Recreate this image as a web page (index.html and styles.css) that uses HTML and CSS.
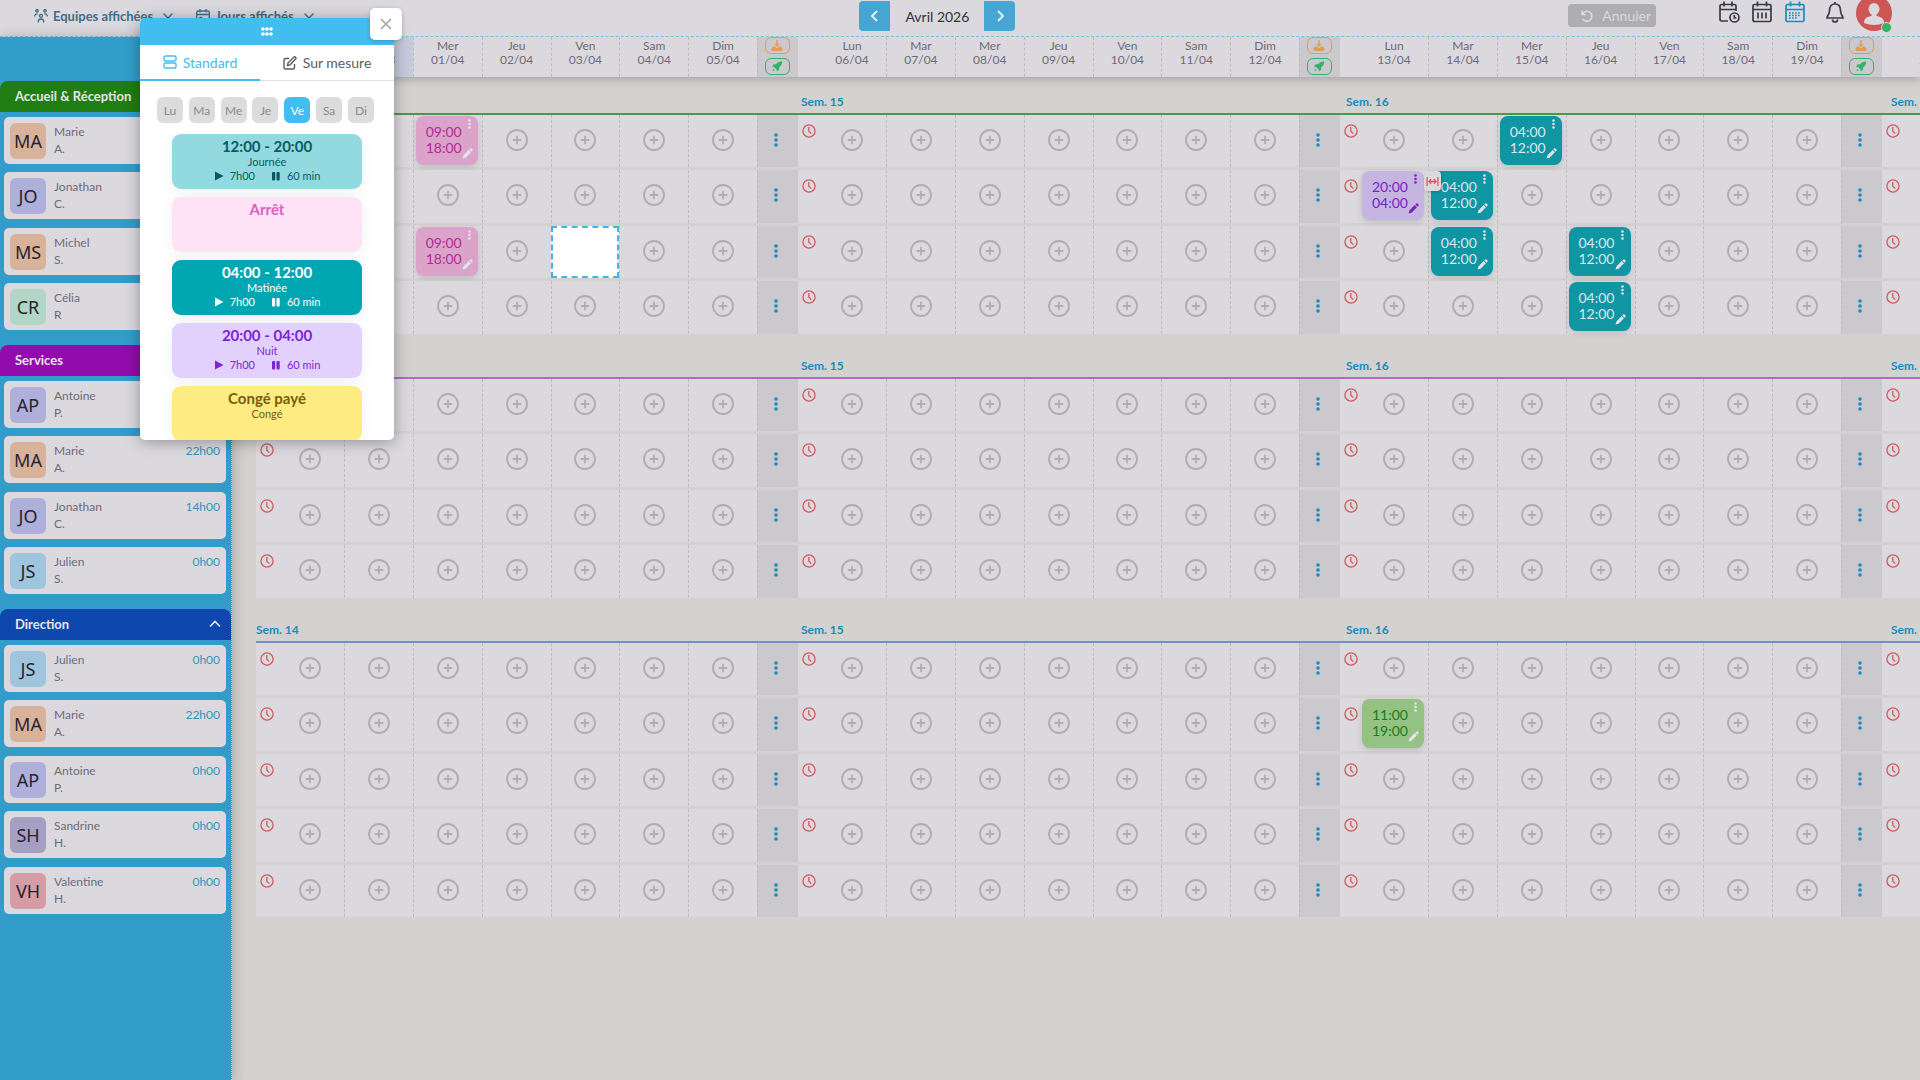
FILE: index.html
```html
<!DOCTYPE html>
<html lang="fr">
<head>
<meta charset="utf-8">
<title>Planning - Avril 2026</title>
<link rel="stylesheet" href="styles.css">
</head>
<body>
<svg class="sprite" aria-hidden="true">
  <symbol id="plus" viewBox="0 0 22 22"><circle cx="11" cy="11" r="10" fill="none" stroke="currentColor" stroke-width="1.8"/><path d="M11 6.8v8.4M6.8 11h8.4" stroke="currentColor" stroke-width="1.8"/></symbol>
  <symbol id="clock" viewBox="0 0 14 14"><circle cx="7" cy="7" r="6.1" fill="none" stroke="currentColor" stroke-width="1.3"/><path d="M6.8 3v4.2L9.3 9.6" fill="none" stroke="currentColor" stroke-width="1.3"/></symbol>
  <symbol id="dots" viewBox="0 0 4 14"><circle cx="2" cy="2" r="1.8"/><circle cx="2" cy="7" r="1.8"/><circle cx="2" cy="12" r="1.8"/></symbol>
  <symbol id="pencil" viewBox="0 0 12 12"><path d="M0.6 11.4l.9-3.3 5.8-5.8 2.4 2.4-5.8 5.8zM8 1.6l1-1a1 1 0 0 1 1.4 0l1 1a1 1 0 0 1 0 1.4l-1 1z"/></symbol>
  <symbol id="down" viewBox="0 0 12 12"><path d="M5.200 0h1.600v4.500h2.400L6 7.700 2.800 4.500h2.400z"/><path d="M1.800 7h2L6 9.200 8.200 7h2L12 9.500V11a1 1 0 0 1-1 1H1a1 1 0 0 1-1-1V9.500z"/></symbol>
  <symbol id="rocket" viewBox="0 0 12 12"><path d="M11.500.500C8.500.300 6.500 1.500 5 3.600H2.500L.5 6.300l2.200.200L5.500 9.300l.2 2.200 2.600-2V7c2.100-1.500 3.400-3.500 3.200-6.500zM2 8.400 1 11l2.700-.9z"/></symbol>
  <symbol id="chevron" viewBox="0 0 12 12"><path d="M2 4l4 4 4-4" fill="none" stroke="currentColor" stroke-width="1.400" stroke-linecap="round"/></symbol>
  <symbol id="play" viewBox="0 0 10 10"><path d="M1 0.500 9.500 5 1 9.500z"/></symbol>
  <symbol id="pause" viewBox="0 0 10 10"><rect x="1" y="1" width="3.200" height="8.500" rx="1"/><rect x="5.500" y="1" width="3.200" height="8.500" rx="1"/></symbol>
  <symbol id="gap" viewBox="0 0 14 10"><path d="M1 0v10M13 0v10M3 5h8M5.500 2.500 3 5l2.500 2.500M8.500 2.500 11 5 8.500 7.500" fill="none" stroke="currentColor" stroke-width="1.400"/></symbol>
</svg>

<header class="topbar">
  <div class="filters">
    <button class="filter" type="button">
      <svg class="i14" viewBox="0 0 14 14" fill="none" stroke="currentColor" stroke-width="1.300"><circle cx="3" cy="1.800" r="1.200"/><circle cx="11" cy="1.800" r="1.200"/><circle cx="7" cy="6.800" r="1.500"/><path d="M.7 7.500V7a2 2 0 0 1 3-1.800M13.300 7.500V7a2 2 0 0 0-3-1.800M4.300 13.500v-.8a2.700 2.700 0 0 1 5.400 0v.8"/></svg>
      <span>Equipes affichées</span><svg class="i12"><use href="#chevron"/></svg>
    </button>
    <button class="filter" type="button">
      <svg class="i14" viewBox="0 0 14 14" fill="none" stroke="currentColor" stroke-width="1.300"><rect x=".7" y="2" width="12.600" height="11.300" rx="1.500"/><path d="M.7 5.500h12.600M4 0v3.500M10 0v3.500"/><path d="M4 8.500h1.500v1.500H4z" fill="currentColor"/></svg>
      <span>Jours affichés</span><svg class="i12"><use href="#chevron"/></svg>
    </button>
  </div>
  <div class="month">
    <button class="step prev" type="button" aria-label="Mois précédent"><svg class="i14" viewBox="0 0 14 14"><path d="M9 2 4 7l5 5" fill="none" stroke="currentColor" stroke-width="1.800"/></svg></button>
    <span class="month-name">Avril 2026</span>
    <button class="step next" type="button" aria-label="Mois suivant"><svg class="i14" viewBox="0 0 14 14"><path d="M5 2l5 5-5 5" fill="none" stroke="currentColor" stroke-width="1.800"/></svg></button>
  </div>
  <div class="tools">
    <button class="undo" type="button"><svg class="i14" viewBox="0 0 14 14" fill="none" stroke="currentColor" stroke-width="1.700"><path d="M2 1.500v4h4M2.300 5.300a5 5 0 1 1 .4 4.700"/></svg>Annuler</button>
    <nav class="views" aria-label="Vues">
      <button class="view" type="button" aria-label="Jour"><svg class="i22" viewBox="0 0 22 22" fill="none" stroke="currentColor" stroke-width="1.700"><path d="M10 20H3.500A1.500 1.500 0 0 1 2 18.500V5a1.500 1.500 0 0 1 1.500-1.500h13A1.500 1.500 0 0 1 18 5v5M2 8.500h16M6 .5v5M14 .5v5"/><circle cx="16.500" cy="16.500" r="4.500"/><path d="M16.300 14v2.800h2"/></svg></button>
      <button class="view" type="button" aria-label="Semaine"><svg class="i22" viewBox="0 0 22 22" fill="none" stroke="currentColor" stroke-width="1.700"><rect x="2" y="3.500" width="18" height="17" rx="1.500"/><path d="M2 8.500h18M6.500.5v5M15.500.5v5M7 11.500v6M11 11.500v6M15 11.500v6"/></svg></button>
      <button class="view on" type="button" aria-label="Mois"><svg class="i22" viewBox="0 0 22 22" fill="none" stroke="currentColor" stroke-width="1.700"><rect x="2" y="3.500" width="18" height="17" rx="1.500"/><path d="M2 8.500h18M6.500.5v5M15.500.5v5"/><path d="M5 12h12M5 14.500h12M5 17h9" stroke-dasharray="1.700 1.300"/></svg></button>
    </nav>
    <button class="view bell" type="button" aria-label="Notifications"><svg class="i22" viewBox="0 0 22 22" fill="none" stroke="currentColor" stroke-width="1.700"><path d="M11 1v2M11 3c-4 0-5.500 3-5.500 6.500C5.500 14 3 14.500 3 17h16c0-2.500-2.500-3-2.500-7.500C16.500 6 15 3 11 3zM8.500 18.500a2.500 2.500 0 0 0 5 0"/></svg></button>
    <button class="me" type="button" aria-label="Mon compte"><svg viewBox="0 0 36 36"><circle cx="18" cy="18" r="18" fill="#ce5654"/><ellipse cx="18" cy="14" rx="5.500" ry="6" fill="#dbd9de"/><path d="M15.500 18h5v3c4 1 7.500 1.500 7.500 7q-10 4-20 0c0-5.500 3.500-6 7.500-7z" fill="#dbd9de"/></svg><span class="online"></span></button>
  </div>
</header>

<div class="planner">
  <aside class="teams" id="teams"></aside>
  <main class="board">
    <div class="days" id="days"></div>
    <div id="sections"></div>
  </main>
</div>

<section class="palette" aria-label="Horaires">
  <div class="handle"><svg viewBox="0 0 12 9"><g fill="#fff"><circle cx="2" cy="2" r="1.800"/><circle cx="6" cy="2" r="1.800"/><circle cx="10" cy="2" r="1.800"/><circle cx="2" cy="7" r="1.800"/><circle cx="6" cy="7" r="1.800"/><circle cx="10" cy="7" r="1.800"/></g></svg></div>
  <button class="close" type="button" aria-label="Fermer"><svg class="i12" viewBox="0 0 12 12"><path d="M1 1l10 10M11 1 1 11" stroke="currentColor" stroke-width="1.300"/></svg></button>
  <div class="tabs">
    <button class="tab on" type="button"><svg class="i14" viewBox="0 0 14 14" fill="none" stroke="currentColor" stroke-width="1.400"><rect x="1" y="1" width="12" height="5" rx="1.500"/><rect x="1" y="8" width="12" height="5" rx="1.500"/></svg>Standard</button>
    <button class="tab" type="button"><svg class="i14" viewBox="0 0 14 14" fill="none" stroke="currentColor" stroke-width="1.400"><path d="M6 2.500H2.500A1.500 1.500 0 0 0 1 4v7.500A1.500 1.500 0 0 0 2.500 13H10a1.500 1.500 0 0 0 1.500-1.500V8M4.500 9.500l.5-2.500 5.800-5.800a1.200 1.200 0 0 1 1.800 1.800L7 8.800z"/></svg>Sur mesure</button>
  </div>
  <div class="weekdays">
    <button type="button">Lu</button><button type="button">Ma</button><button type="button">Me</button><button type="button">Je</button><button type="button" class="on">Ve</button><button type="button">Sa</button><button type="button">Di</button>
  </div>
  <div class="models">
    <button type="button" class="model aqua"><strong>12:00 - 20:00</strong><span>Journée</span><span class="meta"><svg><use href="#play"/></svg>7h00<svg><use href="#pause"/></svg>60 min</span></button>
    <button type="button" class="model rose"><strong>Arrêt</strong></button>
    <button type="button" class="model teal"><strong>04:00 - 12:00</strong><span>Matinée</span><span class="meta"><svg><use href="#play"/></svg>7h00<svg><use href="#pause"/></svg>60 min</span></button>
    <button type="button" class="model violet"><strong>20:00 - 04:00</strong><span>Nuit</span><span class="meta"><svg><use href="#play"/></svg>7h00<svg><use href="#pause"/></svg>60 min</span></button>
    <button type="button" class="model yellow"><strong>Congé payé</strong><span>Congé</span></button>
  </div>
</section>
<script src="planner.js"></script>
</body>
</html>
```
FILE: styles.css
```css
* { box-sizing: border-box; }
body { margin: 0; height: 100vh; overflow: hidden; display: flex; flex-direction: column; background: #d3d2d0; color: #6d6a78; font-family: Lato, "Noto Sans", sans-serif; font-size: 12px; }
button { font: inherit; color: inherit; border: 0; padding: 0; background: none; cursor: pointer; }
svg { fill: currentColor; flex: none; display: block; }
.sprite { position: absolute; width: 0; height: 0; }
.i12 { width: 12px; height: 12px; }
.i14 { width: 14px; height: 14px; }
.i22 { width: 22px; height: 22px; }
.i14[fill="none"], .i22[fill="none"] { fill: none; }

.topbar { flex: none; height: 37px; display: grid; grid-template-columns: minmax(0, 19fr) auto minmax(0, 20fr); align-items: start; background: #dbd9de; border-bottom: 1px dashed #7fc0dc; }
.filters { display: flex; gap: 22px; padding: 5px 0 0 34px; }
.filter { display: flex; align-items: center; gap: 5px; height: 22px; color: #3f6d86; font-size: 13px; font-weight: 700; }
.filter .i12 { margin-left: 4px; }
.month { display: flex; align-items: center; padding-top: 1px; }
.step { width: 31px; height: 30px; display: grid; place-items: center; background: #45a6d3; color: #eef; }
.prev { border-radius: 4px 0 0 4px; }
.next { border-radius: 0 4px 4px 0; }
.month-name { width: 94px; text-align: center; font-size: 14px; color: #33313a; }
.tools { display: flex; justify-content: flex-end; padding-right: 28px; }
.undo { display: flex; align-items: center; justify-content: flex-end; gap: 8px; width: 88px; height: 23px; margin: 4px 62px 0 0; padding-right: 5px; border-radius: 4px; background: #aeadb2; color: #dbd9de; font-size: 14px; }
.views { display: flex; gap: 11px; }
.view { color: #3b3944; height: 24px; display: grid; align-items: center; }
.view.on { color: #1a8cba; }
.bell { margin: 0 10px 0 18px; }
.me { position: relative; width: 36px; height: 36px; margin-top: -5px; }
.online { position: absolute; right: 0; bottom: -2px; width: 11px; height: 11px; border: 1px solid #dbd9de; border-radius: 50%; background: #34b36a; }

.planner { flex: 1; min-height: 0; display: flex; }
.teams { flex: none; width: 232px; background: #329dcb; border-right: 1px dotted #b9cfdc; padding-top: 44px; box-shadow: 2px 0 12px #0003; z-index: 1; }
.team { padding-bottom: 6px; }
.team h2 { display: flex; justify-content: space-between; align-items: center; margin: 0 0 5px; height: 31px; padding: 0 10px 2px 15px; border-radius: 8px 8px 0 0; color: #e6e4ea; font-size: 13px; font-weight: 700; }
.team h2 svg { width: 12px; height: 12px; }
.person-slot { height: 55px; padding: 0 5px 8px 4px; }
.person-slot:nth-child(odd) { height: 56px; padding-bottom: 9px; }
.person { height: 47px; display: flex; gap: 8px; padding: 6px; border-radius: 5px; background: #dbd9de; font-size: 12px; line-height: 17px; }
.face { width: 36px; height: 36px; border-radius: 6px; display: grid; place-items: center; color: #26242c; font: 18px/20px "Noto Sans", sans-serif; }
.person-name { flex: 1; }
.hours { color: #2f95bf; }

.board { flex: 1; min-width: 0; overflow: hidden; }
.days { display: flex; height: 40px; padding-left: 24px; background: #dbd9de; box-shadow: 0 3px 8px #0003; position: relative; }
.week { flex: 0 0 542px; display: grid; grid-template-columns: 88px repeat(6, 1fr) 41px; position: relative; }
.day { padding-top: 2px; text-align: center; line-height: 14px; font-size: 12px; border-left: 1px dashed #bcbbc0; }
.day:first-child { padding-left: 20px; border-left: 0; }
.day.today { background: #c5cbdc; }
.publish { display: flex; flex-direction: column; align-items: center; gap: 4px; padding-right: 2px; background: #cbc9ce; border-left: 1px dashed #bcbbc0; }
.publish button { width: 25px; height: 17px; display: grid; place-items: center; border: 1px solid; border-radius: 6px; color: #e49a53; }
.publish button + button { color: #33b26a; }
.publish svg { width: 12px; height: 11px; }

.section { margin-bottom: 7px; padding-left: 24px; }
.labels { display: flex; align-items: flex-end; height: 36px; padding-bottom: 2px; color: #1a8cb5; font-weight: 700; line-height: 18px; }
.labels span { flex: 0 0 545px; }
.rows { display: grid; gap: 3px; border-top: 2px solid; }
.row { display: flex; height: 52px; color: #aeadb2; }
.row:nth-child(even) { height: 53px; }
.row .week { background: #dbd9de; }
.cell { display: grid; place-items: center; padding-bottom: 3px; border-left: 1px dashed #bcbbc0; }
.cell:first-of-type { padding-left: 20px; border-left: 0; }
.add svg { width: 22px; height: 22px; }
.late { position: absolute; left: 4px; top: 9px; width: 14px; height: 14px; color: #d25a5e; }
.more { display: grid; place-items: center; padding: 0 4px 3px 0; background: #cbc9ce; color: #1a8cba; border-left: 1px dashed #bcbbc0; }
.more svg { width: 4px; height: 14px; }
.cell.busy { padding: 1px 4px 0 1px; place-items: start end; }
.cell.target { background: #fff; border: 2px dashed #3fb6e6; }
.shift { position: relative; display: flex; justify-content: space-between; width: 62px; height: 49px; padding: 8px 5px 0 10px; border-radius: 8px; box-shadow: 0 2px 6px #0002; font-size: 14px; line-height: 16px; text-align: left; }
.marks { display: flex; flex-direction: column; align-items: flex-end; justify-content: space-between; margin: -5px 0 6px -4px; }
.marks svg:first-child { width: 3px; height: 10px; margin-right: 2px; }
.marks svg:last-child { width: 11px; height: 11px; }
.shift.pink { background: #dba3c9; color: #b02d92; }
.shift.blue { background: #1095a2; color: #dbe9ec; }
.shift.lilac { background: #c5b5e0; color: #7a1fc4; }
.shift.green { background: #94c283; color: #187a1c; }
.pink .marks, .green .marks, .blue .marks { color: #e6e4ea; }
.rest { position: absolute; left: 84px; top: 1px; z-index: 1; width: 17px; height: 20px; display: grid; place-items: center; border-radius: 4px; background: #dbd9de; color: #d25a5e; box-shadow: 1px 1px 3px #0003; }
.rest svg { width: 13px; height: 9px; }

.palette { position: absolute; z-index: 5; left: 140px; top: 18px; width: 254px; height: 422px; border-radius: 5px; background: #fff; box-shadow: 0 2px 16px #0005; display: flex; flex-direction: column; color: #5d5a68; }
.handle { height: 27px; display: grid; place-items: center; background: #42bdef; border-radius: 5px 5px 0 0; }
.handle svg { width: 12px; height: 9px; }
.close { position: absolute; right: -8px; top: -10px; width: 32px; height: 32px; display: grid; place-items: center; border-radius: 5px; background: #fff; color: #9a98a0; box-shadow: 0 1px 4px #0003; }
.tabs { display: grid; grid-template-columns: 120px 1fr; }
.tab { height: 36px; display: flex; align-items: center; justify-content: center; gap: 6px; border-bottom: 1px solid #e0e0e4; font-size: 14px; }
.tab.on { color: #42bdef; border-bottom: 2px solid #42bdef; }
.weekdays { display: flex; justify-content: space-between; padding: 16px 20px 11px 17px; }
.weekdays button { width: 26px; height: 26px; border-radius: 6px; background: #dcdcdc; color: #8b8992; }
.weekdays .on { background: #42bdef; color: #fff; }
.models { flex: 1; overflow: hidden; display: flex; flex-direction: column; gap: 8px; padding: 0 32px; }
.model { flex: none; height: 55px; display: flex; flex-direction: column; align-items: center; border-radius: 9px; padding-top: 3px; font-size: 11px; line-height: 14px; box-shadow: 0 2px 14px #2351; }
.model strong { font-size: 15px; line-height: 18px; }
.meta { display: flex; align-items: center; gap: 6px; }
.meta svg { width: 10px; height: 10px; }
.meta svg:last-of-type { margin-left: 10px; }
.aqua { background: #92dadf; color: #075a63; }
.rose { background: #fee2f6; color: #dd5fbe; }
.teal { background: #00a6b2; color: #fff; }
.violet { background: #e2d1fc; color: #7e22d8; }
.yellow { background: #feec82; color: #785d0a; }
```
FILE: planner.js
```js
const people = {
  MA: ['Marie', 'A.', '22h00', '#d9b29c'],
  JO: ['Jonathan', 'C.', '14h00', '#aeafda'],
  MS: ['Michel', 'S.', '14h00', '#d9b29c'],
  CR: ['Célia', 'R', '7h00', '#b2d6c6'],
  AP: ['Antoine', 'P.', '0h00', '#aeafda'],
  JS: ['Julien', 'S.', '0h00', '#9fc5de'],
  SH: ['Sandrine', 'H.', '0h00', '#a69fc4'],
  VH: ['Valentine', 'H.', '0h00', '#d59ca6']
};
const teams = [
  { name: 'Accueil & Réception', color: '#1f7d13', line: '#4a9a45', members: ['MA', 'JO', 'MS', 'CR'] },
  { name: 'Services', color: '#920cab', line: '#b766c8', members: ['AP', 'MA', 'JO', 'JS'] },
  { name: 'Direction', color: '#0e47ae', line: '#6f90cf', members: ['JS', 'MA', 'AP', 'SH', 'VH'] }
];
// key: team-row-week-day
const shifts = {
  '0-0-0-2': ['pink', '09:00', '18:00'],
  '0-2-0-2': ['pink', '09:00', '18:00'],
  '0-0-2-2': ['blue', '04:00', '12:00'],
  '0-1-2-0': ['lilac', '20:00', '04:00'],
  '0-1-2-1': ['blue', '04:00', '12:00'],
  '0-2-2-1': ['blue', '04:00', '12:00'],
  '0-2-2-3': ['blue', '04:00', '12:00'],
  '0-3-2-3': ['blue', '04:00', '12:00'],
  '2-1-2-0': ['green', '11:00', '19:00']
};
const target = '0-2-0-4';
const dayNames = ['Lun', 'Mar', 'Mer', 'Jeu', 'Ven', 'Sam', 'Dim'];
const icon = name => `<svg><use href="#${name}"/></svg>`;
const weeks = [0, 1, 2, 3];

document.getElementById('teams').innerHTML = teams.map(t => `
  <section class="team"><h2 style="background:${t.color}">${t.name}<svg viewBox="0 0 12 12"><path d="M1 8.500l5-5 5 5" fill="none" stroke="currentColor" stroke-width="1.600"/></svg></h2>
  ${t.members.map(id => {
    const [first, last, hours, color] = people[id];
    return `<div class="person-slot"><div class="person"><span class="face" style="background:${color}">${id}</span><span class="person-name">${first}<br>${last}</span><span class="hours">${hours}</span></div></div>`;
  }).join('')}</section>`).join('');

document.getElementById('days').innerHTML = weeks.map(w => `<div class="week">${dayNames.map((name, d) => {
  const date = new Date(2026, 2, 30 + w * 7 + d);
  const label = String(date.getDate()).padStart(2, '0') + '/' + String(date.getMonth() + 1).padStart(2, '0');
  return `<div class="day${w === 0 && d === 1 ? ' today' : ''}">${name}<br>${label}</div>`;
}).join('')}<div class="publish"><button type="button" aria-label="Enregistrer">${icon('down')}</button><button type="button" aria-label="Publier">${icon('rocket')}</button></div></div>`).join('');

function cell(key) {
  if (key === target) return '<div class="cell target"></div>';
  const s = shifts[key];
  if (!s) return `<div class="cell"><button class="add" type="button" aria-label="Ajouter">${icon('plus')}</button></div>`;
  return `<div class="cell busy"><button type="button" class="shift ${s[0]}"><span>${s[1]}<br>${s[2]}</span><span class="marks">${icon('dots')}${icon('pencil')}</span></button></div>`;
}

document.getElementById('sections').innerHTML = teams.map((t, ti) => `
  <section class="section"><div class="labels">${weeks.map(w => `<span>Sem. ${14 + w}</span>`).join('')}</div>
  <div class="rows" style="border-color:${t.line}">${t.members.map((m, r) => `<div class="row">${weeks.map(w => `<div class="week">
    ${dayNames.map((n, d) => cell([ti, r, w, d].join('-'))).join('')}
    <button class="more" type="button" aria-label="Actions">${icon('dots')}</button>
    <svg class="late"><use href="#clock"/></svg>${ti === 0 && r === 1 && w === 2 ? `<span class="rest">${icon('gap')}</span>` : ''}</div>`).join('')}</div>`).join('')}</div></section>`).join('');
```
